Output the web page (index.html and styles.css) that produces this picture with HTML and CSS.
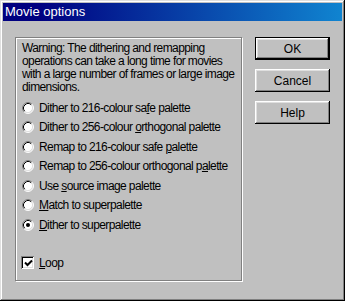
FILE: index.html
```html
<!DOCTYPE html>
<html>
<head>
<meta charset="utf-8">
<link rel="stylesheet" href="styles.css">
</head>
<body>
<div class="window">
  <div class="titlebar"><span class="title">Movie options</span></div>
  <div class="content">
    <div class="group">
      <p class="warning">Warning: The dithering and remapping<br>operations can take a long time for movies<br>with a large number of frames or large image<br>dimensions.</p>
      <div class="options">
        <div class="row"><svg class="radio" width="12" height="12" viewBox="0 0 12 12"><circle cx="6" cy="6" r="5" fill="#fff"/><path d="M2.11 9.89 A5.5 5.5 0 0 1 9.89 2.11" fill="none" stroke="#808080"/><path d="M9.89 2.11 A5.5 5.5 0 0 1 2.11 9.89" fill="none" stroke="#fff"/><path d="M2.82 9.18 A4.5 4.5 0 0 1 9.18 2.82" fill="none" stroke="#000"/><path d="M9.18 2.82 A4.5 4.5 0 0 1 2.82 9.18" fill="none" stroke="#dfdfdf"/></svg><span>Dither to 216-colour sa<u>f</u>e palette</span></div>
        <div class="row"><svg class="radio" width="12" height="12" viewBox="0 0 12 12"><circle cx="6" cy="6" r="5" fill="#fff"/><path d="M2.11 9.89 A5.5 5.5 0 0 1 9.89 2.11" fill="none" stroke="#808080"/><path d="M9.89 2.11 A5.5 5.5 0 0 1 2.11 9.89" fill="none" stroke="#fff"/><path d="M2.82 9.18 A4.5 4.5 0 0 1 9.18 2.82" fill="none" stroke="#000"/><path d="M9.18 2.82 A4.5 4.5 0 0 1 2.82 9.18" fill="none" stroke="#dfdfdf"/></svg><span>Dither to 256-colour <u>o</u>rthogonal palette</span></div>
        <div class="row"><svg class="radio" width="12" height="12" viewBox="0 0 12 12"><circle cx="6" cy="6" r="5" fill="#fff"/><path d="M2.11 9.89 A5.5 5.5 0 0 1 9.89 2.11" fill="none" stroke="#808080"/><path d="M9.89 2.11 A5.5 5.5 0 0 1 2.11 9.89" fill="none" stroke="#fff"/><path d="M2.82 9.18 A4.5 4.5 0 0 1 9.18 2.82" fill="none" stroke="#000"/><path d="M9.18 2.82 A4.5 4.5 0 0 1 2.82 9.18" fill="none" stroke="#dfdfdf"/></svg><span>Remap to 216-colour safe <u>p</u>alette</span></div>
        <div class="row"><svg class="radio" width="12" height="12" viewBox="0 0 12 12"><circle cx="6" cy="6" r="5" fill="#fff"/><path d="M2.11 9.89 A5.5 5.5 0 0 1 9.89 2.11" fill="none" stroke="#808080"/><path d="M9.89 2.11 A5.5 5.5 0 0 1 2.11 9.89" fill="none" stroke="#fff"/><path d="M2.82 9.18 A4.5 4.5 0 0 1 9.18 2.82" fill="none" stroke="#000"/><path d="M9.18 2.82 A4.5 4.5 0 0 1 2.82 9.18" fill="none" stroke="#dfdfdf"/></svg><span>Remap to 256-colour orthogonal p<u>a</u>lette</span></div>
        <div class="row"><svg class="radio" width="12" height="12" viewBox="0 0 12 12"><circle cx="6" cy="6" r="5" fill="#fff"/><path d="M2.11 9.89 A5.5 5.5 0 0 1 9.89 2.11" fill="none" stroke="#808080"/><path d="M9.89 2.11 A5.5 5.5 0 0 1 2.11 9.89" fill="none" stroke="#fff"/><path d="M2.82 9.18 A4.5 4.5 0 0 1 9.18 2.82" fill="none" stroke="#000"/><path d="M9.18 2.82 A4.5 4.5 0 0 1 2.82 9.18" fill="none" stroke="#dfdfdf"/></svg><span>Use <u>s</u>ource image palette</span></div>
        <div class="row"><svg class="radio" width="12" height="12" viewBox="0 0 12 12"><circle cx="6" cy="6" r="5" fill="#fff"/><path d="M2.11 9.89 A5.5 5.5 0 0 1 9.89 2.11" fill="none" stroke="#808080"/><path d="M9.89 2.11 A5.5 5.5 0 0 1 2.11 9.89" fill="none" stroke="#fff"/><path d="M2.82 9.18 A4.5 4.5 0 0 1 9.18 2.82" fill="none" stroke="#000"/><path d="M9.18 2.82 A4.5 4.5 0 0 1 2.82 9.18" fill="none" stroke="#dfdfdf"/></svg><span><u>M</u>atch to superpalette</span></div>
        <div class="row"><svg class="radio" width="12" height="12" viewBox="0 0 12 12"><circle cx="6" cy="6" r="5" fill="#fff"/><path d="M2.11 9.89 A5.5 5.5 0 0 1 9.89 2.11" fill="none" stroke="#808080"/><path d="M9.89 2.11 A5.5 5.5 0 0 1 2.11 9.89" fill="none" stroke="#fff"/><path d="M2.82 9.18 A4.5 4.5 0 0 1 9.18 2.82" fill="none" stroke="#000"/><path d="M9.18 2.82 A4.5 4.5 0 0 1 2.82 9.18" fill="none" stroke="#dfdfdf"/><circle cx="6" cy="6" r="2" fill="#000"/></svg><span><u>D</u>ither to superpalette</span></div>
      </div>
      <div class="row loop"><span class="checkbox"><svg width="9" height="9" viewBox="0 0 9 9"><path d="M1 3.5 L3.5 6 L8 1.5" fill="none" stroke="#000" stroke-width="2"/></svg></span><span><u>L</u>oop</span></div>
    </div>
    <div class="buttons">
      <div class="btn default">OK</div>
      <div class="btn">Cancel</div>
      <div class="btn">Help</div>
    </div>
  </div>
</div>
</body>
</html>
```

FILE: styles.css
```css
html, body {
  margin: 0;
  padding: 0;
  background: #c0c0c0;
}
body {
  font-family: "Liberation Sans", Arial, sans-serif;
  font-size: 12px;
  letter-spacing: -0.6px;
  color: #000;
}
.window {
  width: 345px;
  height: 301px;
  box-sizing: border-box;
  background: #c0c0c0;
  padding: 3px;
  box-shadow: inset -1px -1px #000, inset 1px 1px #dfdfdf, inset -2px -2px #808080, inset 2px 2px #fff;
}
.titlebar {
  height: 18px;
  background: linear-gradient(to right, #000080 10%, #1084d0);
  display: flex;
  align-items: center;
  padding-left: 2px;
}
.title {
  color: #fff;
  font-size: 13px;
  letter-spacing: 0;
  line-height: 18px;
}
.content {
  display: flex;
  padding: 16px 0 0 12px;
  gap: 13px;
}
.group {
  width: 227px;
  height: 244px;
  box-sizing: border-box;
  border: 1px solid #808080;
  box-shadow: 1px 1px #fff, inset 1px 1px #fff;
  padding: 4px 0 0 6px;
  display: flex;
  flex-direction: column;
}
.warning {
  margin: 0;
  line-height: 13px;
  white-space: nowrap;
}
.options {
  margin-top: 4px;
  display: flex;
  flex-direction: column;
}
.row {
  height: 19.5px;
  display: flex;
  align-items: center;
  white-space: nowrap;
}
.radio {
  flex: none;
  margin-right: 5px;
}
.loop {
  margin-top: 18.5px;
}
.checkbox {
  width: 13px;
  height: 13px;
  box-sizing: border-box;
  background: #fff;
  box-shadow: inset 1px 1px #808080, inset -1px -1px #fff, inset 2px 2px #000, inset -2px -2px #dfdfdf;
  display: flex;
  align-items: center;
  justify-content: center;
  margin-left: -1px;
  margin-right: 5px;
}
.checkbox svg {
  display: block;
  margin: 1px 0 0 1px;
}
.buttons {
  display: flex;
  flex-direction: column;
  gap: 9px;
}
.btn {
  width: 75px;
  height: 23px;
  box-sizing: border-box;
  display: flex;
  align-items: center;
  justify-content: center;
  letter-spacing: 0;
  background: #c0c0c0;
  box-shadow: inset -1px -1px #000, inset 1px 1px #fff, inset -2px -2px #808080, inset 2px 2px #dfdfdf;
}
.btn.default {
  border: 1px solid #000;
  box-shadow: inset -1px -1px #000, inset 1px 1px #fff, inset -2px -2px #808080, inset 2px 2px #dfdfdf;
}
```
